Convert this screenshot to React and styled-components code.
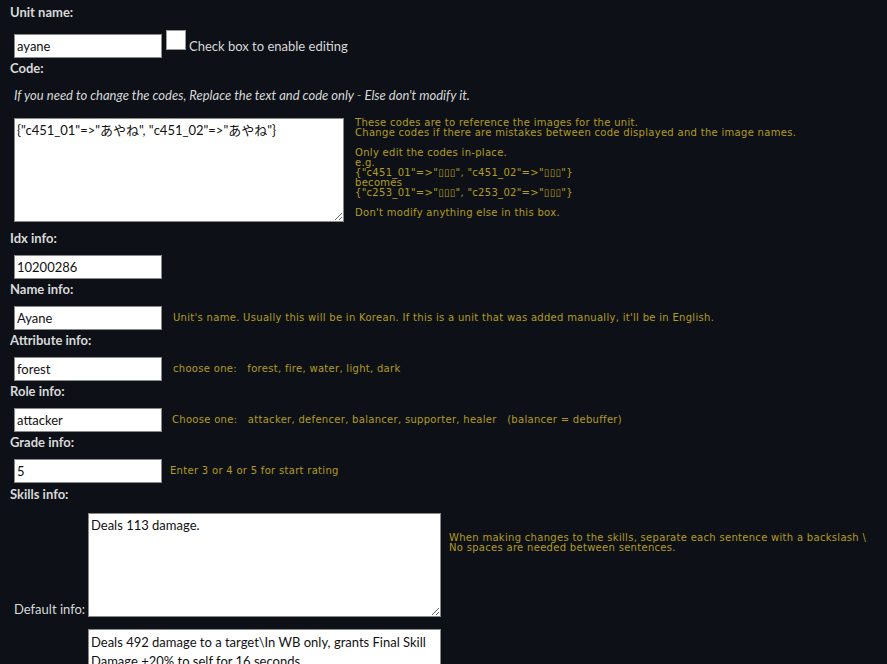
import React from "react";
import styled, { createGlobalStyle } from "styled-components";

const Global = createGlobalStyle`
  html, body { margin: 0; padding: 0; background: #0d1117; }
  body { font-family: Lato, "Noto Sans", sans-serif; color: #d6d6d6; overflow: hidden; }
  * { box-sizing: border-box; }
`;

const Page = styled.div`
  padding: 4px 10px 0 10px;
  display: flex;
  flex-direction: column;
  height: 664px;
  overflow: hidden;
`;

const Label = styled.div`
  font-weight: 700;
  font-size: 13px;
  line-height: 16px;
  color: #d9d9d9;
  margin-top: ${(p) => p.$top || 0}px;
`;

const Row = styled.div`
  display: flex;
  align-items: ${(p) => p.$align || "center"};
  padding-left: 4px;
  margin-top: ${(p) => p.$top || 0}px;
`;

const TextInput = styled.input`
  width: 148px;
  height: 24px;
  flex: none;
  border: 1px solid #8a8a8a;
  background: #fff;
  color: #111;
  font-family: Lato, "Noto Sans", sans-serif;
  font-size: 13px;
  padding: 0 2px;
  margin: 0;
  outline: none;
`;

const Check = styled.input`
  appearance: none;
  width: 20px;
  height: 20px;
  margin: 0 3px 12px 4px;
  background: #fff;
  border: 1px solid #9a9a9a;
`;

const CheckText = styled.span`
  font-size: 13px;
  color: #d8d8d8;
`;

const Note = styled.div`
  font-style: italic;
  font-size: 13px;
  line-height: 16px;
  color: #d8d8d8;
  padding-left: 4px;
  margin-top: 11px;
`;

const Dash = styled.span`
  color: #b89a3a;
`;

const Area = styled.textarea`
  width: ${(p) => p.$w}px;
  height: ${(p) => p.$h}px;
  flex: none;
  border: 1px solid #8a8a8a;
  background: #fff;
  color: #111;
  font-family: Lato, "Noto Sans CJK JP", sans-serif;
  font-size: 13px;
  line-height: ${(p) => p.$lh || 20}px;
  padding: ${(p) => p.$pt || 1}px 2px 1px 2px;
  margin: 0;
  resize: both;
  outline: none;
  overflow: hidden;
`;

const Hint = styled.div`
  font-family: "DejaVu Sans", Verdana, sans-serif;
  font-size: 10px;
  line-height: 10px;
  letter-spacing: 0.3px;
  color: #b39c1f;
  white-space: pre;
  padding-left: ${(p) => p.$pl || 0}px;
  padding-top: ${(p) => p.$pt || 0}px;
`;

const SkillRow = styled.div`
  display: flex;
  align-items: flex-start;
  padding-left: 4px;
  margin-top: ${(p) => p.$top || 0}px;
`;

const SkillLabel = styled.div`
  width: 74px;
  flex: none;
  align-self: flex-end;
  font-size: 13px;
  line-height: 16px;
  color: #d8d8d8;
  white-space: nowrap;
`;

const fields = [
  { label: "Idx info:", value: "10200286", hint: "", pl: 0 },
  {
    label: "Name info:",
    value: "Ayane",
    hint: "Unit's name. Usually this will be in Korean. If this is a unit that was added manually, it'll be in English.",
    pl: 11,
  },
  { label: "Attribute info:", value: "forest", hint: "choose one:   forest, fire, water, light, dark", pl: 11 },
  {
    label: "Role info:",
    value: "attacker",
    hint: "Choose one:   attacker, defencer, balancer, supporter, healer   (balancer = debuffer)",
    pl: 10,
  },
  { label: "Grade info:", value: "5", hint: "Enter 3 or 4 or 5 for start rating", pl: 8 },
];

const codeHint = `These codes are to reference the images for the unit.
Change codes if there are mistakes between code displayed and the image names.

Only edit the codes in-place.
e.g.
{"c451_01"=>"▯▯▯", "c451_02"=>"▯▯▯"}
becomes
{"c253_01"=>"▯▯▯", "c253_02"=>"▯▯▯"}

Don't modify anything else in this box.`;

const skillHint = `When making changes to the skills, separate each sentence with a backslash \\
No spaces are needed between sentences.`;

export default function App() {
  return (
    <>
      <Global />
      <Page>
        <Label>Unit name:</Label>
        <Row $top={10}>
          <TextInput defaultValue="ayane" />
          <Check type="checkbox" />
          <CheckText>Check box to enable editing</CheckText>
        </Row>
        <Label $top={-2}>Code:</Label>
        <Note>
          If you need to change the codes, Replace the text and code only <Dash>-</Dash> Else don't modify it.
        </Note>
        <Row $top={15} $align="flex-start">
          <Area
            $w={330}
            $h={104}
            defaultValue={'{"c451_01"=>"あやね", "c451_02"=>"あやね"}'}
          />
          <Hint $pl={11}>{codeHint}</Hint>
        </Row>
        {fields.map((f, i) => (
          <React.Fragment key={f.label}>
            <Label $top={i === 0 ? 8 : 2}>{f.label}</Label>
            <Row $top={9}>
              <TextInput defaultValue={f.value} />
              <Hint $pl={f.pl}>{f.hint}</Hint>
            </Row>
          </React.Fragment>
        ))}
        <Label $top={3}>Skills info:</Label>
        <SkillRow $top={11}>
          <SkillLabel>Default info:</SkillLabel>
          <Area $w={353} $h={104} defaultValue="Deals 113 damage." />
          <Hint $pl={8} $pt={20}>{skillHint}</Hint>
        </SkillRow>
        <SkillRow $top={12}>
          <SkillLabel />
          <Area
            $w={353}
            $h={104}
            $pt={3}
            $lh={19}
            defaultValue={"Deals 492 damage to a target\\In WB only, grants Final Skill Damage +20% to self for 16 seconds."}
          />
        </SkillRow>
      </Page>
    </>
  );
}
